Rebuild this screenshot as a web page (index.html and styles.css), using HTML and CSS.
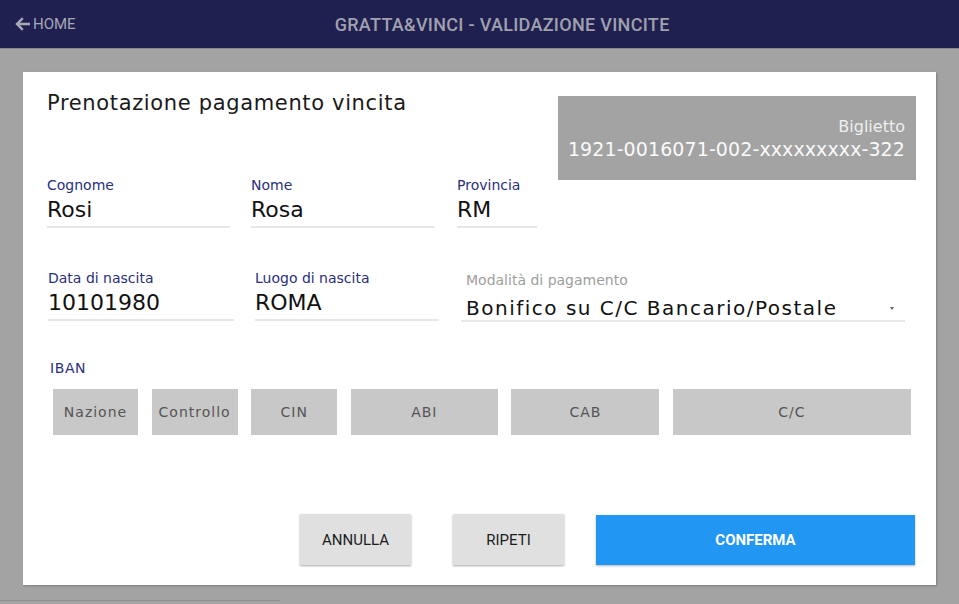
FILE: index.html
```html
<!DOCTYPE html>
<html lang="it">
<head>
<meta charset="utf-8">
<title>Gratta&amp;Vinci - Validazione vincite</title>
<link rel="stylesheet" href="styles.css">
</head>
<body>
<header class="topbar">
  <a class="home" href="#">
    <svg class="home-arrow" width="17" height="16" viewBox="0 0 17 16" aria-hidden="true"><path d="M16 8H2.8M8.8 2.2L3 8l5.8 5.8" fill="none" stroke="currentColor" stroke-width="2.4"/></svg>
    <span>HOME</span>
  </a>
  <h1 class="app-title">GRATTA&amp;VINCI - VALIDAZIONE VINCITE</h1>
</header>
<main class="stage">
  <section class="dialog">
    <div class="dialog-top">
      <h2 class="dialog-title">Prenotazione pagamento vincita</h2>
      <div class="ticket">
        <div class="ticket-label">Biglietto</div>
        <div class="ticket-code">1921-0016071-002-xxxxxxxxx-322</div>
      </div>
    </div>
    <div class="row row-1">
      <div class="field w-cognome"><label class="field-label">Cognome</label><div class="field-value">Rosi</div></div>
      <div class="field w-nome"><label class="field-label">Nome</label><div class="field-value">Rosa</div></div>
      <div class="field w-prov"><label class="field-label">Provincia</label><div class="field-value">RM</div></div>
    </div>
    <div class="row row-2">
      <div class="field w-data"><label class="field-label">Data di nascita</label><div class="field-value">10101980</div></div>
      <div class="field w-luogo"><label class="field-label">Luogo di nascita</label><div class="field-value">ROMA</div></div>
      <div class="select w-mod">
        <label class="select-label">Modalità di pagamento</label>
        <div class="select-value"><span>Bonifico su C/C Bancario/Postale</span><span class="caret"></span></div>
      </div>
    </div>
    <div class="iban-label">IBAN</div>
    <div class="iban">
      <div class="iban-box b-naz">Nazione</div>
      <div class="iban-box b-ctrl">Controllo</div>
      <div class="iban-box b-cin">CIN</div>
      <div class="iban-box b-abi">ABI</div>
      <div class="iban-box b-cab">CAB</div>
      <div class="iban-box b-cc">C/C</div>
    </div>
    <div class="actions">
      <button class="btn btn-flat btn-annulla">ANNULLA</button>
      <button class="btn btn-flat btn-ripeti">RIPETI</button>
      <button class="btn btn-primary">CONFERMA</button>
    </div>
  </section>
  <div class="bottom-line"></div>
</main>
</body>
</html>
```
FILE: styles.css
```css
* { box-sizing: border-box; }
html, body { margin: 0; padding: 0; }
body {
  width: 959px;
  height: 604px;
  overflow: hidden;
  background: #a3a3a3;
  font-family: "DejaVu Sans", sans-serif;
}

.topbar {
  height: 49px;
  background: #1f2050;
  border-bottom: 1px solid #8a8a8a;
  display: flex;
  align-items: center;
}
.home {
  display: flex;
  align-items: center;
  margin-left: 14px;
  color: #a7a7b6;
  text-decoration: none;
  font-family: Roboto, sans-serif;
  font-size: 15px;
}
.home-arrow { margin-right: 2px; }
.app-title {
  margin: 0 0 0 259px;
  font-family: Roboto, sans-serif;
  font-weight: 500;
  font-size: 18px;
  color: #a0a0ae;
  letter-spacing: 0.3px;
}

.stage { padding: 23px 23px 0 23px; }
.dialog {
  width: 913px;
  background: #fff;
  padding: 0 0 20px 24px;
  box-shadow: 1px 1px 2px rgba(0,0,0,0.25);
}
.dialog-top {
  display: flex;
  justify-content: space-between;
  align-items: flex-start;
}
.dialog-title {
  margin: 19px 0 0 0;
  font-weight: normal;
  font-size: 21px;
  line-height: 24px;
  letter-spacing: 0.65px;
  color: #1a1a1a;
}
.ticket {
  margin: 24px 20px 0 0;
  width: 358px;
  height: 84px;
  background: #a3a3a3;
  padding: 22px 11px 0 0;
  text-align: right;
}
.ticket-label {
  font-size: 16px;
  line-height: 18px;
  color: #eeeeee;
}
.ticket-code {
  margin-top: 1px;
  font-size: 19px;
  line-height: 24px;
  letter-spacing: 0.1px;
  color: #fafafa;
  white-space: nowrap;
}

.row { display: flex; align-items: flex-start; }
.row-1 { margin-top: -3px; }
.row-2 { margin-top: 42px; padding-left: 1px; }

.field {
  padding-bottom: 3px;
  border-bottom: 2px solid #e7e7e7;
}
.field-label {
  display: block;
  font-size: 14px;
  line-height: 16px;
  color: #2a2f7c;
}
.field-value {
  margin-top: 4px;
  font-size: 22px;
  line-height: 26px;
  color: #111;
}
.w-cognome { width: 183px; margin-right: 21px; }
.w-nome { width: 184px; margin-right: 22px; }
.w-prov { width: 80px; }
.w-data { width: 186px; margin-right: 21px; }
.w-luogo { width: 184px; margin-right: 22px; }
.w-mod { width: 444px; }

.select {
  padding-top: 2px;
  padding-left: 5px;
  border-bottom: 2px solid #e7e7e7;
}
.select-label {
  display: block;
  font-size: 14px;
  line-height: 16px;
  color: #9e9e9e;
}
.select-value {
  margin-top: 8px;
  display: flex;
  justify-content: space-between;
  align-items: center;
  font-size: 20px;
  line-height: 24px;
  letter-spacing: 1.5px;
  color: #111;
  padding-right: 11px;
}
.caret {
  width: 0;
  height: 0;
  border-left: 2.5px solid transparent;
  border-right: 2.5px solid transparent;
  border-top: 3px solid #666;
}

.iban-label {
  margin: 38px 0 0 3px;
  font-size: 14px;
  line-height: 16px;
  letter-spacing: 0.6px;
  color: #2a2f7c;
}
.iban {
  display: flex;
  gap: 13.6px;
  margin: 13px 0 0 6px;
}
.iban-box {
  height: 46px;
  background: #c8c8c8;
  display: flex;
  align-items: center;
  justify-content: center;
  font-size: 14px;
  letter-spacing: 1px;
  color: #555;
}
.b-naz { width: 85px; }
.b-ctrl { width: 86px; }
.b-cin { width: 86px; }
.b-abi { width: 147px; }
.b-cab { width: 148px; }
.b-cc { width: 238px; }

.actions {
  display: flex;
  justify-content: flex-end;
  align-items: flex-start;
  margin-top: 79px;
  padding-right: 21px;
}
.btn {
  border: 0;
  height: 51px;
  font-family: Roboto, sans-serif;
  font-size: 15px;
  cursor: pointer;
}
.btn-flat {
  width: 111px;
  background: #e0e0e0;
  color: #1c1c1c;
  box-shadow: 0 1px 2px rgba(0,0,0,0.35);
}
.btn-annulla { margin-right: 42px; }
.btn-ripeti { margin-right: 32px; }
.btn-primary {
  width: 319px;
  height: 50px;
  margin-top: 1px;
  background: #2196f3;
  color: #fff;
  font-weight: 700;
  box-shadow: 0 1px 2px rgba(0,0,0,0.3);
}

.bottom-line {
  width: 280px;
  height: 1px;
  margin: 15px 0 0 -23px;
  background: #8d8d8d;
}
```
